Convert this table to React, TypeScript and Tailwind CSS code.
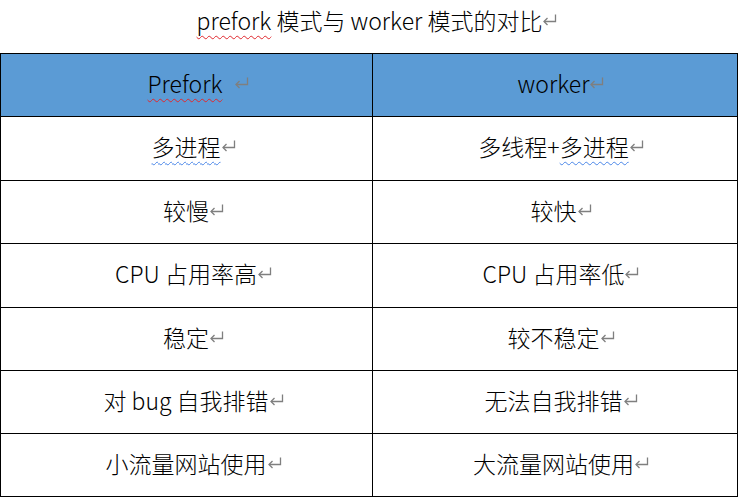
import React from "react";

// pilcrow-style paragraph mark that Word shows at the end of each paragraph
const Mark = ({ className = "" }: { className?: string }) => (
  <svg
    width="15"
    height="13"
    viewBox="0 0 15 13"
    className={`inline-block align-[3px] ${className}`}
    fill="none"
    stroke="#7f7f7f"
    strokeWidth="1.3"
  >
    <path d="M13.5 0.5 V7.5 H2" />
    <path d="M5.5 4 L2 7.5 L5.5 11" />
  </svg>
);

const ROWS: { left: React.ReactNode; right: React.ReactNode; h: string }[] = [
  {
    left: (
      <span className="underline decoration-wavy decoration-[#4a86e8] decoration-1 underline-offset-[5px]">
        多进程
      </span>
    ),
    right: (
      <>
        多线程+
        <span className="underline decoration-wavy decoration-[#4a86e8] decoration-1 underline-offset-[5px]">
          多进程
        </span>
      </>
    ),
    h: "h-[64px]",
  },
  { left: "较慢", right: "较快", h: "h-[63px]" },
  { left: "CPU 占用率高", right: "CPU 占用率低", h: "h-[64px]" },
  { left: "稳定", right: "较不稳定", h: "h-[63px]" },
  { left: "对 bug 自我排错", right: "无法自我排错", h: "h-[63px]" },
  { left: "小流量网站使用", right: "大流量网站使用", h: "h-[63px]" },
];

const font = { fontFamily: '"Noto Sans CJK SC", "Noto Sans", sans-serif' };

export default function App() {
  return (
    <div className="w-[740px] h-[502px] bg-white overflow-hidden text-black" style={font}>
      {/* Title */}
      <div className="h-[53px] flex items-center justify-center pl-[14px] pb-[12px]">
        <p className="text-[23px] leading-none font-light">
          <span className="underline decoration-wavy decoration-[#e0282e] decoration-1 underline-offset-[5px]">
            prefork
          </span>{" "}
          模式与 worker 模式的对比
          <Mark />
        </p>
      </div>

      {/* Table */}
      <div className="border-t border-black w-[738px]">
        <div className="flex">
          <div className="w-[373px] h-[63px] bg-[#5b9bd5] border-l border-r border-b border-black flex items-center justify-center pl-[24px] pb-[3px]">
            <span className="text-[23px] leading-none font-light">
              <span className="underline decoration-wavy decoration-[#e0282e] decoration-1 underline-offset-[5px]">
                Prefork
              </span>
              <span className="ml-[12px]">
                <Mark />
              </span>
            </span>
          </div>
          <div className="w-[365px] h-[63px] bg-[#5b9bd5] border-r border-b border-black flex items-center justify-center pl-[12px] pb-[3px]">
            <span className="text-[23px] leading-none font-light">
              worker
              <Mark />
            </span>
          </div>
        </div>
        {ROWS.map((row, i) => (
          <div key={i} className="flex">
            <div
              className={`w-[373px] ${row.h} border-l border-r border-b border-black flex items-center justify-center pl-[14px] pb-[4px]`}
            >
              <span className="text-[23px] leading-none font-light">
                {row.left}
                <Mark />
              </span>
            </div>
            <div
              className={`w-[365px] ${row.h} border-r border-b border-black flex items-center justify-center pl-[12px] pb-[4px]`}
            >
              <span className="text-[23px] leading-none font-light">
                {row.right}
                <Mark />
              </span>
            </div>
          </div>
        ))}
      </div>
    </div>
  );
}
